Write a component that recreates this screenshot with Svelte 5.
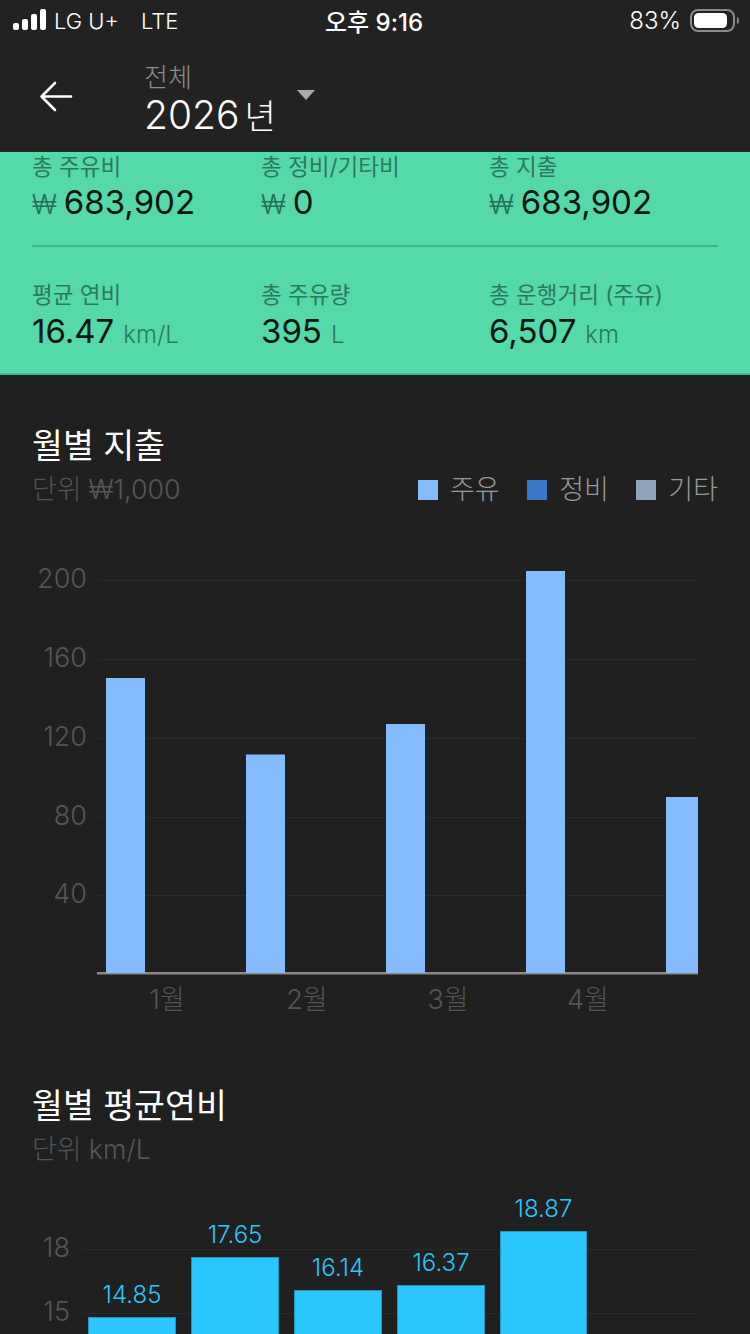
<script>
  const topStats = [
    { label: '총 주유비', won: true, value: '683,902' },
    { label: '총 정비/기타비', won: true, value: '0' },
    { label: '총 지출', won: true, value: '683,902' }
  ];
  const bottomStats = [
    { label: '평균 연비', value: '16.47', unit: 'km/L' },
    { label: '총 주유량', value: '395', unit: 'L' },
    { label: '총 운행거리 (주유)', value: '6,507', unit: 'km' }
  ];
  const legend = [
    { name: '주유', color: '#85bbff' },
    { name: '정비', color: '#3c76c6' },
    { name: '기타', color: '#90a3bd' }
  ];

  // chart coordinates are relative to each svg's top left
  const spendGrid = [
    { label: '200', y: 30 },
    { label: '160', y: 109 },
    { label: '120', y: 188 },
    { label: '80', y: 267 },
    { label: '40', y: 345 }
  ];
  const spendBars = [
    { x: 106, w: 39, top: 128 },
    { x: 246, w: 39, top: 204.5 },
    { x: 386, w: 39, top: 174 },
    { x: 526, w: 39, top: 21 },
    { x: 666, w: 32, top: 247 }
  ];
  const months = [
    { label: '1월', x: 167 },
    { label: '2월', x: 307 },
    { label: '3월', x: 448 },
    { label: '4월', x: 588 }
  ];
  const effGrid = [
    { label: '18', y: 69 },
    { label: '15', y: 133 }
  ];
  const effBars = [
    { x: 88, w: 88, top: 137, value: '14.85' },
    { x: 191, w: 88, top: 77, value: '17.65' },
    { x: 294, w: 88, top: 110, value: '16.14' },
    { x: 397, w: 88, top: 105, value: '16.37' },
    { x: 500, w: 87, top: 51, value: '18.87' }
  ];
</script>

<div class="page">
  <header class="top">
    <div class="status">
      <div class="status-left">
        <svg class="signal" viewBox="0 0 34 22" width="34" height="22">
          <rect x="0" y="14" width="6" height="7" rx="2" />
          <rect x="9" y="10" width="6" height="11" rx="2" />
          <rect x="18" y="5" width="6" height="16" rx="2" />
          <rect x="27" y="0" width="6" height="21" rx="2" />
        </svg>
        <span>LG U+</span>
        <span class="lte">LTE</span>
      </div>
      <div class="clock">오후 9:16</div>
      <div class="status-right">
        <span>83%</span>
        <svg class="battery" viewBox="0 0 50 24" width="50" height="24">
          <rect x="1" y="1" width="43" height="21" rx="7" fill="none" stroke="#8a8a8a" stroke-width="2" />
          <rect x="4" y="4" width="33" height="15" rx="4.5" fill="#fff" />
          <path d="M47 8c1.5.5 2 2 2 3.500s-.5 3-2 3.500z" fill="#8a8a8a" />
        </svg>
      </div>
    </div>
    <div class="title-bar">
      <svg class="back" viewBox="0 0 34 32" width="34" height="32" fill="none" stroke="#fff" stroke-width="2.600" stroke-linecap="round" stroke-linejoin="round">
        <path d="M32 15.500H2.500M16 2 2.500 15.500 16 29" />
      </svg>
      <div class="title">
        <div class="scope">전체</div>
        <div class="year">2026<span class="year-unit">년</span></div>
      </div>
      <div class="caret"></div>
    </div>
  </header>

  <section class="stats">
    <div class="stat-row row-top">
      {#each topStats as s}
        <div class="stat">
          <div class="stat-label">{s.label}</div>
          <div class="stat-value"><span class="won">₩</span>{s.value}</div>
        </div>
      {/each}
    </div>
    <div class="stat-line"></div>
    <div class="stat-row row-bottom">
      {#each bottomStats as s}
        <div class="stat">
          <div class="stat-label">{s.label}</div>
          <div class="stat-value">{s.value}<span class="unit">{s.unit}</span></div>
        </div>
      {/each}
    </div>
  </section>

  <section class="chart-block first">
    <div class="chart-head">
      <div>
        <h2>월별 지출</h2>
        <div class="sub">단위 ₩1,000</div>
      </div>
      <div class="legend">
        {#each legend as item}
          <div class="legend-item">
            <span class="swatch" style="background: {item.color}"></span>
            <span>{item.name}</span>
          </div>
        {/each}
      </div>
    </div>
    <svg class="chart chart-spend" viewBox="0 0 750 480" width="750" height="480">
      {#each spendGrid as g}
        <line x1="97" x2="698" y1={g.y + 0.5} y2={g.y + 0.5} class="grid" />
        <text x="87" y={g.y + 8} text-anchor="end" class="axis">{g.label}</text>
      {/each}
      <rect x="97" y="422" width="601" height="2.500" fill="#888" />
      {#each spendBars as b}
        <rect x={b.x} y={b.top} width={b.w} height={423 - b.top} class="bar-spend" />
      {/each}
      {#each months as m}
        <text x={m.x} y="459" text-anchor="middle" class="axis">{m.label}</text>
      {/each}
    </svg>
  </section>

  <section class="chart-block second">
    <h2>월별 평균연비</h2>
    <div class="sub">단위 km/L</div>
    <svg class="chart chart-eff" viewBox="0 0 750 160" width="750" height="160">
      {#each effGrid as g}
        <line x1="81" x2="698" y1={g.y + 0.5} y2={g.y + 0.5} class="grid" />
        <text x="70" y={g.y + 8} text-anchor="end" class="axis">{g.label}</text>
      {/each}
      {#each effBars as b}
        <rect x={b.x + 0.5} y={b.top + 0.5} width={b.w - 1} height={170 - b.top} class="bar-eff" />
        <text x={b.x + b.w / 2} y={b.top - 14} text-anchor="middle" class="bar-label">{b.value}</text>
      {/each}
    </svg>
  </section>
</div>

<style>
  :global(body) {
    margin: 0;
    background: #202020;
  }
  .page {
    width: 750px;
    height: 1334px;
    overflow: hidden;
    background: #202020;
    color: #fff;
    font-family: Inter, "Noto Sans CJK KR", sans-serif;
  }
  .top {
    height: 152px;
    box-sizing: border-box;
    background: #222;
    border-bottom: 1px solid #15352a;
  }
  .status {
    display: flex;
    align-items: center;
    justify-content: space-between;
    height: 41px;
    padding: 0 13px;
    font-size: 22px;
    position: relative;
  }
  .status-left {
    display: flex;
    align-items: center;
    font-weight: 300;
  }
  .status-left span {
    margin-left: 7px;
  }
  .status-left .lte {
    margin-left: 22px;
  }
  .signal {
    fill: #fff;
    margin-bottom: 1px;
  }
  .clock {
    position: absolute;
    left: 325px;
    font-size: 24px;
    font-weight: 500;
  }
  .status-right {
    display: flex;
    align-items: center;
    gap: 9px;
    font-size: 24px;
    font-weight: 300;
  }
  .battery {
    margin-right: -3px;
  }
  .title-bar {
    display: flex;
    align-items: flex-start;
    padding-left: 39px;
  }
  .back {
    margin-top: 40px;
  }
  .title {
    margin-left: 71px;
    margin-top: 20px;
  }
  .scope {
    font-size: 26px;
    line-height: 34px;
    color: #8c8c8c;
    font-weight: 300;
  }
  .year {
    margin-top: -3px;
    font-size: 39px;
    line-height: 46px;
    font-weight: 300;
    letter-spacing: 0;
    white-space: nowrap;
  }
  .year-unit {
    font-size: 34px;
    margin-left: 5px;
  }
  .caret {
    width: 0;
    height: 0;
    margin: 49px 0 0 21px;
    border-left: 9px solid transparent;
    border-right: 9px solid transparent;
    border-top: 10px solid #aaa;
  }
  .stats {
    height: 223px;
    box-sizing: border-box;
    padding: 0 32px;
    background: #55d9a8;
    border-bottom: 2px solid #3fbb8f;
  }
  .stat-row {
    display: grid;
    grid-template-columns: 229px 228px 1fr;
  }
  .row-top {
    height: 93px;
  }
  .row-bottom {
    padding-top: 33px;
  }
  .row-bottom .stat-value {
    line-height: 44px;
  }
  .stat-line {
    height: 2px;
    background: #3fb58b;
  }
  .stat-label {
    font-size: 22.500px;
    line-height: 29px;
    color: #2a7a60;
    white-space: nowrap;
  }
  .stat-value {
    font-size: 33px;
    line-height: 42px;
    color: #08160f;
    font-weight: 400;
    white-space: nowrap;
  }
  .won {
    font-size: 27px;
    font-weight: 300;
    margin-right: 7px;
    color: #24705a;
  }
  .unit {
    font-size: 24px;
    margin-left: 9px;
    color: #2a7a60;
    font-weight: 300;
  }
  .first {
    margin-top: 49px;
  }
  .second {
    margin-top: 54px;
  }
  h2 {
    margin: 0 32px;
    font-size: 33.600px;
    line-height: 43px;
    font-weight: 400;
    white-space: nowrap;
  }
  .sub {
    margin: 0 32px;
    font-size: 26.800px;
    line-height: 44px;
    color: #555;
    font-weight: 300;
    white-space: nowrap;
  }
  .chart-head {
    display: flex;
    justify-content: space-between;
    align-items: flex-end;
  }
  .legend {
    display: flex;
    gap: 27.500px;
    padding-right: 32px;
    margin-bottom: -1px;
    font-size: 27px;
    line-height: 44px;
    color: #999;
    font-weight: 300;
  }
  .legend-item {
    display: flex;
    align-items: center;
    gap: 12px;
  }
  .swatch {
    width: 20px;
    height: 20px;
  }
  .chart {
    display: block;
  }
  .chart-spend {
    margin-top: 39px;
  }
  .chart-eff {
    margin-top: 9px;
  }
  .grid {
    stroke: #2a2a2a;
    stroke-width: 1;
  }
  .axis {
    font-size: 27px;
    fill: #555;
    font-weight: 300;
  }
  .bar-spend {
    fill: #85bbff;
  }
  .bar-eff {
    fill: #2bc5ff;
    stroke: #2594bd;
    stroke-width: 1;
  }
  .bar-label {
    font-size: 24px;
    fill: #2bc5ff;
    font-weight: 300;
  }
</style>
